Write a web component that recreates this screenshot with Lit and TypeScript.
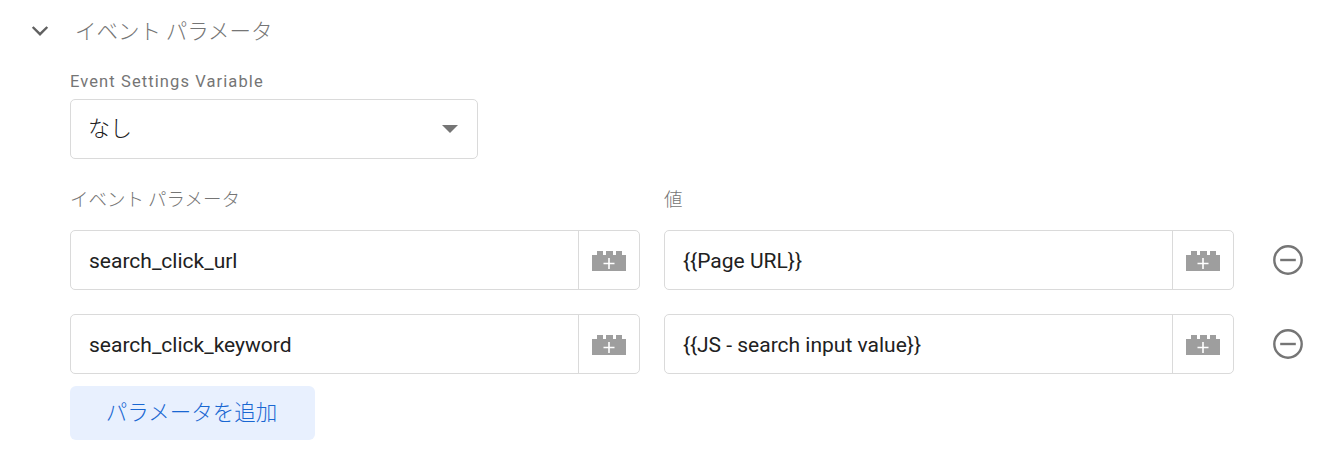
import { LitElement, html, css } from 'lit';
import { customElement } from 'lit/decorators.js';

const rows = [
  { name: 'search_click_url', value: '{{Page URL}}' },
  { name: 'search_click_keyword', value: '{{JS - search input value}}' },
];

const brick = html`<svg width="34" height="20" viewBox="0 0 34 20" aria-hidden="true">
  <path fill="#9e9e9e" d="M0 4h5V0h6v4h3V0h7v4h3V0h6v4h4v16H0z" />
  <path fill="none" stroke="#fff" stroke-width="1.6" d="M11.5 12.5h11M17 7v11" />
</svg>`;

const field = (text: string) => html`
  <div class="field">
    <div class="text">${text}</div>
    <div class="addon">${brick}</div>
  </div>
`;

@customElement('app-root')
export class AppRoot extends LitElement {
  static styles = css`
    :host {
      display: block;
      width: 1336px;
      height: 460px;
      background: #fff;
      overflow: hidden;
      font-family: Roboto, 'Noto Sans CJK JP', sans-serif;
      color: #212121;
    }
    .section {
      padding: 17px 0 0 30px;
    }
    .head {
      display: flex;
      align-items: center;
      height: 28px;
      gap: 25px;
    }
    .chevron {
      display: block;
      flex: none;
    }
    .title {
      margin-top: -4px;
      font-family: 'Noto Sans CJK JP', sans-serif;
      font-weight: 300;
      font-size: 21.5px;
      color: #757575;
    }
    .body {
      padding: 26px 0 0 40px;
    }
    .label {
      font-size: 16.5px;
      line-height: 22px;
      letter-spacing: 1.1px;
      color: #757575;
    }
    .cjk {
      font-family: 'Noto Sans CJK JP', sans-serif;
      font-weight: 300;
      font-size: 18.5px;
      letter-spacing: 0;
    }
    .select {
      box-sizing: border-box;
      display: flex;
      align-items: center;
      justify-content: space-between;
      width: 408px;
      height: 60px;
      margin-top: 6px;
      padding: 0 19px 0 17px;
      border: 1px solid #dadada;
      border-radius: 5px;
      font-family: 'Noto Sans CJK JP', sans-serif;
      font-weight: 300;
      font-size: 22px;
    }
    .select span:first-child {
      margin-top: -6px;
    }
    .caret {
      width: 0;
      height: 0;
      border-left: 8px solid transparent;
      border-right: 8px solid transparent;
      border-top: 8px solid #757575;
    }
    .labels {
      display: grid;
      grid-template-columns: 570px 570px;
      column-gap: 24px;
      margin-top: 27px;
    }
    .labels .label {
      height: 44px;
      line-height: 24px;
    }
    .row {
      display: grid;
      grid-template-columns: 570px 570px 54px;
      column-gap: 24px;
      align-items: center;
      margin-bottom: 24px;
    }
    .row:last-of-type {
      margin-bottom: 12px;
    }
    .field {
      box-sizing: border-box;
      display: flex;
      height: 60px;
      border: 1px solid #dadada;
      border-radius: 5px;
    }
    .text {
      flex: 1;
      align-self: center;
      padding: 2px 0 0 18px;
      font-size: 21px;
      color: #212121;
    }
    .addon {
      flex: none;
      display: flex;
      align-items: center;
      justify-content: center;
      box-sizing: border-box;
      width: 61px;
      padding: 1px 1px 0 0;
      border-left: 1px solid #dadada;
    }
    .remove {
      display: block;
      margin-left: 14px;
    }
    .add {
      display: flex;
      align-items: center;
      justify-content: center;
      width: 245px;
      height: 54px;
      padding: 0 2px 6px 0;
      border: 0;
      border-radius: 6px;
      background: #e8f0fe;
      color: #1967d2;
      font-family: 'Noto Sans CJK JP', sans-serif;
      font-weight: 300;
      font-size: 21.5px;
    }
  `;

  render() {
    return html`
      <div class="section">
        <div class="head">
          <svg class="chevron" width="20" height="28" viewBox="0 0 20 28" aria-hidden="true">
            <path d="M2.7 10 10 17.2 17.3 10" fill="none" stroke="#616161" stroke-width="2.4" />
          </svg>
          <div class="title">イベント パラメータ</div>
        </div>
        <div class="body">
          <div class="label">Event Settings Variable</div>
          <div class="select">
            <span>なし</span>
            <span class="caret"></span>
          </div>
          <div class="labels">
            <div class="label cjk">イベント パラメータ</div>
            <div class="label cjk">値</div>
          </div>
          ${rows.map(
            (r) => html`
              <div class="row">
                ${field(r.name)} ${field(r.value)}
                <svg class="remove" width="32" height="32" viewBox="0 0 32 32" aria-hidden="true">
                  <circle cx="16" cy="16" r="13.7" fill="none" stroke="#757575" stroke-width="2.4" />
                  <path d="M8.2 16h15.6" stroke="#757575" stroke-width="2.4" />
                </svg>
              </div>
            `,
          )}
          <button class="add">パラメータを追加</button>
        </div>
      </div>
    `;
  }
}
